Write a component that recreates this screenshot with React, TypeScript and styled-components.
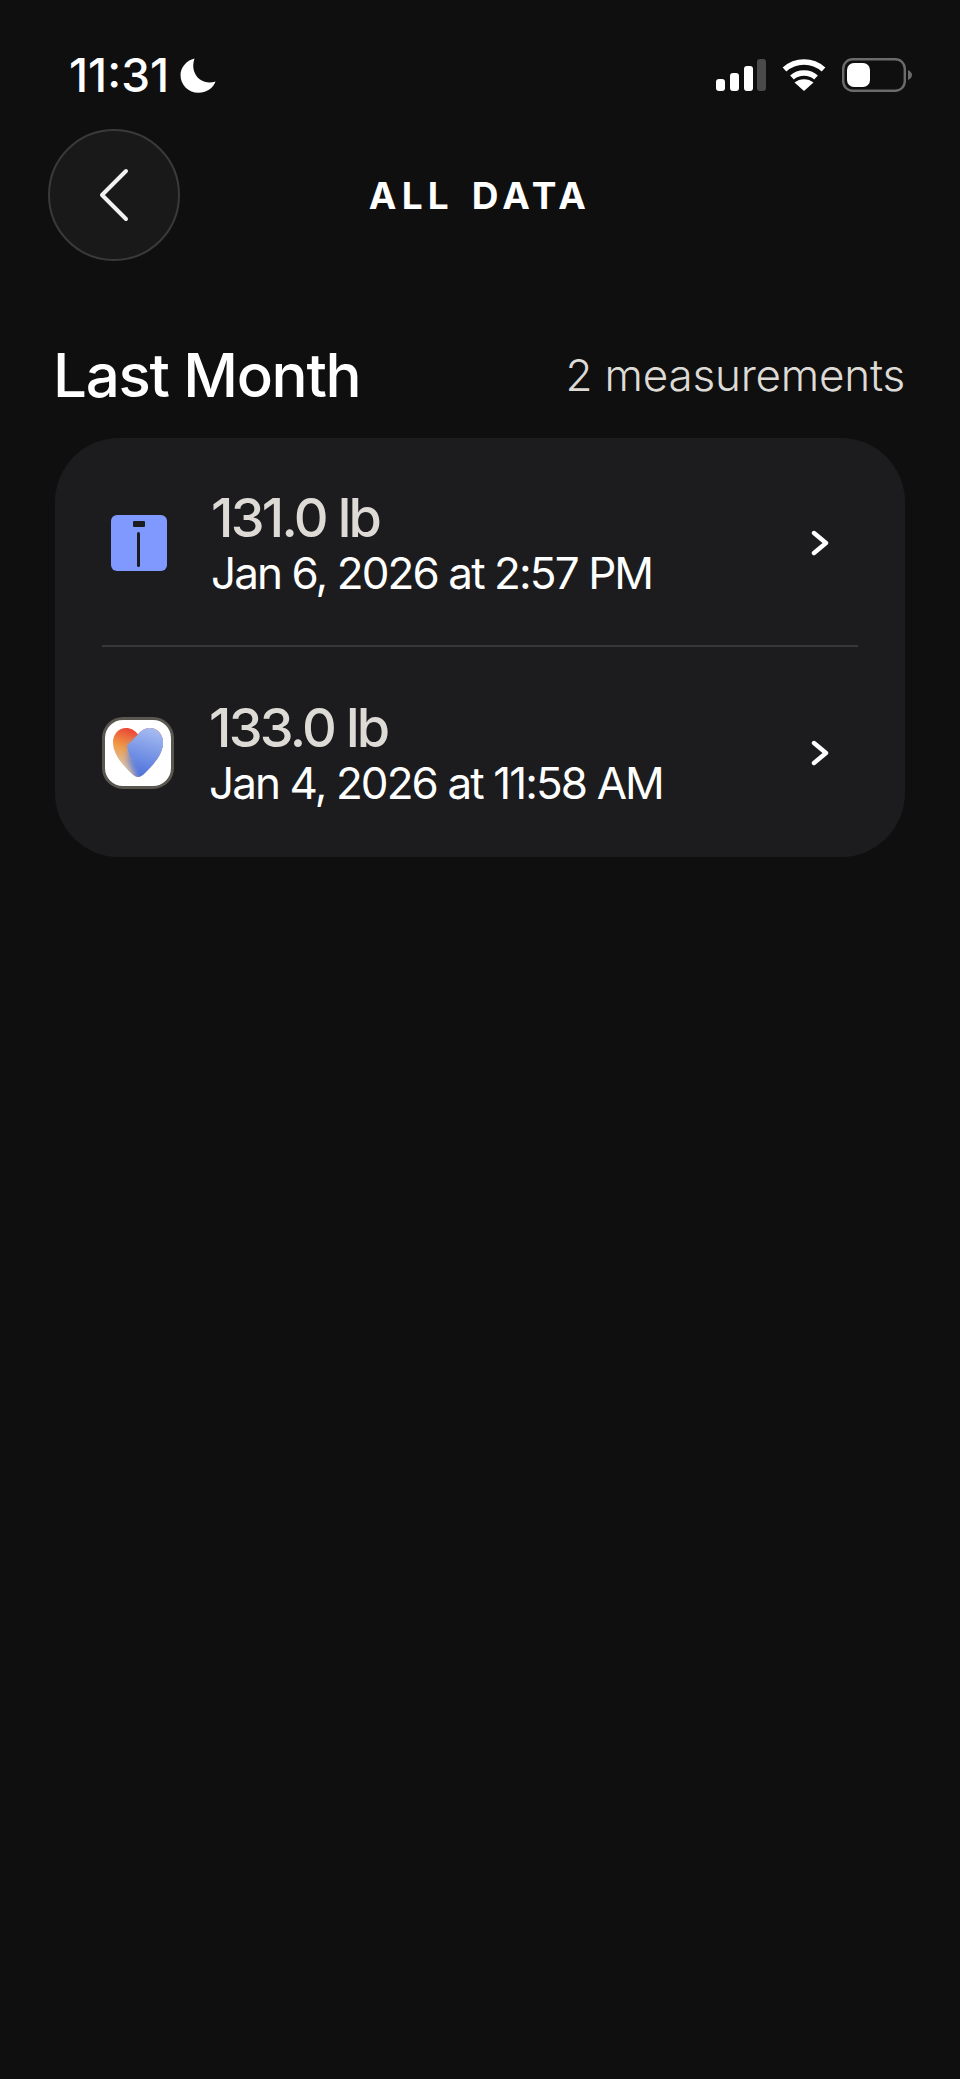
import React from "react";
import styled, { createGlobalStyle } from "styled-components";

const Global = createGlobalStyle`
  html, body { margin: 0; padding: 0; background: #0f0f10; }
  body { font-family: Inter, "Liberation Sans", sans-serif; }
`;

const Page = styled.div`
  width: 960px;
  height: 2079px;
  background: #0f0f10;
  overflow: hidden;
  color: #fff;
`;

const StatusBar = styled.div`
  display: flex;
  align-items: center;
  justify-content: space-between;
  height: 34px;
  padding: 58px 48px 0 69px;
`;

const TimeGroup = styled.div`
  display: flex;
  align-items: center;
  gap: 11px;
`;

const Time = styled.span`
  font-size: 46px;
  font-weight: 500;
  letter-spacing: 0;
  line-height: 34px;
`;

const StatusIcons = styled.div`
  display: flex;
  align-items: center;
  gap: 16px;
`;

const Header = styled.header`
  display: grid;
  grid-template-columns: 132px 1fr 132px;
  align-items: center;
  padding: 37px 48px 0;
`;

const BackButton = styled.button`
  width: 132px;
  height: 132px;
  box-sizing: border-box;
  border-radius: 50%;
  border: 2px solid #3a3a3a;
  background: #191919;
  display: flex;
  align-items: center;
  justify-content: center;
  padding: 0;
`;

const Title = styled.h1`
  margin: 0;
  text-align: center;
  font-size: 37px;
  font-weight: 700;
  letter-spacing: 5.2px;
  word-spacing: 4px;
  color: #fff;
`;

const SectionHead = styled.div`
  display: flex;
  align-items: center;
  justify-content: space-between;
  padding: 79px 55px 0 53px;
  height: 70px;
  margin-bottom: 28px;
`;

const SectionTitle = styled.h2`
  margin: 0;
  font-size: 60px;
  font-weight: 500;
  letter-spacing: -1.3px;
  line-height: 70px;
`;

const Count = styled.span`
  font-size: 44px;
  font-weight: 300;
  letter-spacing: -0.2px;
  color: #dedbd6;
`;

const Card = styled.section`
  margin: 0 55px;
  background: #1c1c1e;
  border-radius: 64px;
  display: flex;
  flex-direction: column;
`;

const Row = styled.div<{ $height: number }>`
  display: flex;
  align-items: center;
  box-sizing: border-box;
  height: ${(p) => p.$height}px;
  padding: 2px 76px 0 47px;
`;

const Divider = styled.div`
  height: 2px;
  background: #38383a;
  margin: 0 47px;
`;

const IconSlot = styled.div<{ $width: number }>`
  width: ${(p) => p.$width}px;
  flex: none;
  display: flex;
  justify-content: center;
  align-items: center;
`;

const Texts = styled.div<{ $inset: number }>`
  flex: 1;
  display: flex;
  flex-direction: column;
  padding: 4px 0 0 ${(p) => p.$inset}px;
`;

const Weight = styled.div`
  font-size: 54px;
  font-weight: 450;
  letter-spacing: -2.7px;
  line-height: 56px;
  color: #dedbd6;
`;

const DateText = styled.div`
  font-size: 44px;
  font-weight: 380;
  letter-spacing: -1.9px;
  line-height: 54px;
  color: #fff;
`;

const DeviceIcon = styled.div`
  width: 56px;
  height: 56px;
  background: #7f99ff;
  border-radius: 6px;
  display: flex;
  flex-direction: column;
  align-items: center;
`;

const DeviceCap = styled.div`
  width: 12px;
  height: 6px;
  margin-top: 6px;
  background: #1c1c1e;
  border-radius: 1px;
`;

const DeviceStem = styled.div`
  width: 3px;
  height: 35px;
  margin-top: 5px;
  background: #1c1c1e;
  border-radius: 2px;
`;

const AppIcon = styled.div`
  width: 72px;
  height: 72px;
  flex: none;
  box-sizing: border-box;
  border-radius: 21px;
  background: #fff;
  border: 3px solid #5a5650;
  display: flex;
  align-items: center;
  justify-content: center;
`;

const Signal = () => (
  <svg width="50" height="32" viewBox="0 0 50 32">
    <rect x="0" y="20" width="9" height="12" rx="3" fill="#fff" />
    <rect x="14" y="14" width="9" height="18" rx="3" fill="#fff" />
    <rect x="28" y="7" width="9" height="25" rx="3" fill="#fff" />
    <rect x="41" y="0" width="9" height="32" rx="3" fill="#4a4a4a" />
  </svg>
);

const Wifi = () => (
  <svg width="44" height="32" viewBox="0 0 44 32" fill="none">
    <path d="M2.5 10.5C13.5 0.5 30.5 0.5 41.5 10.5" stroke="#fff" strokeWidth="5.5" />
    <path d="M10 18.5C16.5 12.5 27.5 12.5 34 18.5" stroke="#fff" strokeWidth="5.5" />
    <path d="M22 32L12.5 23.5C18 19 26 19 31.5 23.5Z" fill="#fff" />
  </svg>
);

const Battery = () => (
  <svg width="70" height="34" viewBox="0 0 70 34" fill="none">
    <rect x="1.2" y="1.2" width="61.6" height="31.6" rx="9.5" stroke="#6b6b6b" strokeWidth="2.4" />
    <rect x="5" y="5" width="23" height="24" rx="7" fill="#fff" />
    <path d="M66 12C68.5 13 70 15 70 17C70 19 68.5 21 66 22Z" fill="#6b6b6b" />
  </svg>
);

const Moon = () => (
  <svg width="36" height="35" viewBox="0 0 36 35">
    <path d="M14.5 0.5C11.5 9 14 17 20 21.5C24.5 24.5 30 25.5 35.5 23.5C33 30.5 26 34.8 18.5 34.8C8.5 34.8 0.5 27 0.5 17C0.5 9.5 6.5 2.5 14.5 0.5Z" fill="#fff" />
  </svg>
);

const BackChevron = () => (
  <svg width="30" height="54" viewBox="0 0 30 54" fill="none">
    <path d="M27 3L3 27L27 51" stroke="#f2f2f2" strokeWidth="4" strokeLinecap="round" strokeLinejoin="round" />
  </svg>
);

const RowChevron = () => (
  <svg width="18" height="26" viewBox="0 0 18 26" fill="none">
    <path d="M3 3L15 13L3 23" stroke="#fff" strokeWidth="4.4" strokeLinecap="round" strokeLinejoin="round" />
  </svg>
);

const HEART =
  "M26 50C23.5 50 21 48 19 46C11 38 1 28 1 15C1 7 7 1 14 1C19 1 23 3.5 26 7.5C29 3.5 33 1 38 1C45 1 51 7 51 15C51 28 41 38 33 46C31 48 28.5 50 26 50Z";

const Heart = () => (
  <svg width="52" height="52" viewBox="0 0 52 52">
    <defs>
      <linearGradient id="warm" gradientUnits="userSpaceOnUse" x1="20" y1="2" x2="8" y2="36">
        <stop offset="0" stopColor="#ea4335" />
        <stop offset="0.55" stopColor="#f09a45" />
        <stop offset="1" stopColor="#dcbf9f" />
      </linearGradient>
      <linearGradient id="cool" gradientUnits="userSpaceOnUse" x1="38" y1="2" x2="24" y2="50">
        <stop offset="0" stopColor="#a4baf0" />
        <stop offset="1" stopColor="#4a6fdb" />
      </linearGradient>
      <clipPath id="heartClip">
        <path d={HEART} />
      </clipPath>
      <filter id="soft" x="-30%" y="-30%" width="160%" height="160%">
        <feGaussianBlur stdDeviation="3" />
      </filter>
    </defs>
    <g clipPath="url(#heartClip)">
      <rect x="0" y="0" width="52" height="52" fill="url(#warm)" />
      <path d="M17 18L16 34L26 56L60 56L60 10L30 10Z" fill="url(#cool)" filter="url(#soft)" />
      <path d="M26 7.5L15 19L18 30L52 30L52 0L30 0Z" fill="url(#cool)" />
    </g>
  </svg>
);

export default function App() {
  return (
    <Page>
      <Global />
      <StatusBar>
        <TimeGroup>
          <Time>11:31</Time>
          <Moon />
        </TimeGroup>
        <StatusIcons>
          <Signal />
          <Wifi />
          <Battery />
        </StatusIcons>
      </StatusBar>
      <Header>
        <BackButton aria-label="Back">
          <BackChevron />
        </BackButton>
        <Title>ALL DATA</Title>
      </Header>
      <SectionHead>
        <SectionTitle>Last Month</SectionTitle>
        <Count>2 measurements</Count>
      </SectionHead>
      <Card>
        <Row $height={207}>
          <IconSlot $width={73}>
            <DeviceIcon>
              <DeviceCap />
              <DeviceStem />
            </DeviceIcon>
          </IconSlot>
          <Texts $inset={36}>
            <Weight>131.0 lb</Weight>
            <DateText>Jan 6, 2026 at 2:57 PM</DateText>
          </Texts>
          <RowChevron />
        </Row>
        <Divider />
        <Row $height={210}>
          <IconSlot $width={72}>
            <AppIcon>
              <Heart />
            </AppIcon>
          </IconSlot>
          <Texts $inset={35}>
            <Weight>133.0 lb</Weight>
            <DateText>Jan 4, 2026 at 11:58 AM</DateText>
          </Texts>
          <RowChevron />
        </Row>
      </Card>
    </Page>
  );
}
